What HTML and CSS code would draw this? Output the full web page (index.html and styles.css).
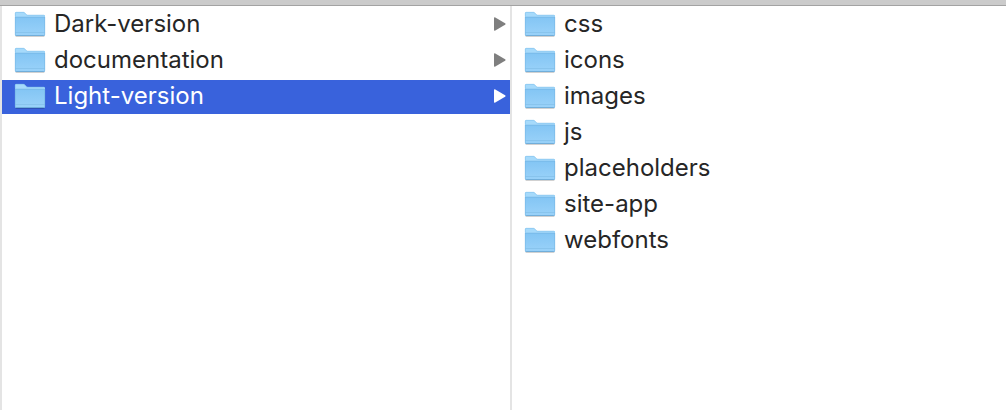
FILE: index.html
```html
<!DOCTYPE html>
<html lang="en">
<head>
<meta charset="utf-8">
<title>Files</title>
<link rel="stylesheet" href="styles.css">
</head>
<body>
<svg class="defs" aria-hidden="true">
  <defs>
    <linearGradient id="front" x1="0" y1="0" x2="0" y2="1">
      <stop offset="0" stop-color="#83c5f4"/>
      <stop offset="1" stop-color="#9ad2f9"/>
    </linearGradient>
    <symbol id="folder" viewBox="0 0 32 28">
      <path d="M1.500 25.200h29v1q0 .7-.7.7H2.200q-.7 0-.7-.7z" fill="#000" opacity=".18"/>
      <path d="M1 3.200Q1 2 2.200 2h7.200q.9 0 1.500.7l1.300 1.500q.6.700 1.500.700H29.800Q31 4.900 31 6.100V24.600q0 1.200-1.200 1.200H2.200Q1 25.800 1 24.600z" fill="#a6dafb"/>
      <path d="M1 7h30v17.600q0 1.200-1.200 1.200H2.200Q1 25.800 1 24.600z" fill="url(#front)"/>
      <path d="M1 7.200h30" stroke="#75b8e6" stroke-width=".8"/>
      <path d="M1.400 22.500h29.200" stroke="#82bfe8" stroke-width=".7"/>
      <path d="M1.400 24.800q0 .7.800.7h27.600q.8 0 .8-.7" fill="none" stroke="#65a5d2" stroke-width=".8"/>
      <path d="M1.300 7v17.500M30.700 7v17.500" stroke="#74b5e2" stroke-width=".6"/>
      <path d="M1.300 6.500V3.200q0-.9.900-.9h7.200q.8 0 1.300.6l1.300 1.500q.7.800 1.700.8h16.100q.9 0 .9.900" fill="none" stroke="#7fc0eb" stroke-width=".6"/>
    </symbol>
    <symbol id="arrow" viewBox="0 0 14 16">
      <path d="M1 2.200Q1 .8 2.300 1.500L12.100 7.200Q13.300 8 12.100 8.800L2.300 14.500Q1 15.200 1 13.800z" fill="currentColor"/>
    </symbol>
  </defs>
</svg>
<div class="window">
  <div class="topbar"></div>
  <main class="columns">
    <nav class="column parent" aria-label="Folders">
      <a class="row" href="#"><svg class="folder"><use href="#folder"/></svg><span class="name">Dark-version</span><svg class="arrow"><use href="#arrow"/></svg></a>
      <a class="row" href="#"><svg class="folder"><use href="#folder"/></svg><span class="name">documentation</span><svg class="arrow"><use href="#arrow"/></svg></a>
      <a class="row selected" href="#" aria-current="true"><svg class="folder"><use href="#folder"/></svg><span class="name">Light-version</span><svg class="arrow"><use href="#arrow"/></svg></a>
    </nav>
    <nav class="column" aria-label="Light-version">
      <a class="row" href="#"><svg class="folder"><use href="#folder"/></svg><span class="name">css</span></a>
      <a class="row" href="#"><svg class="folder"><use href="#folder"/></svg><span class="name">icons</span></a>
      <a class="row" href="#"><svg class="folder"><use href="#folder"/></svg><span class="name">images</span></a>
      <a class="row" href="#"><svg class="folder"><use href="#folder"/></svg><span class="name">js</span></a>
      <a class="row" href="#"><svg class="folder"><use href="#folder"/></svg><span class="name">placeholders</span></a>
      <a class="row" href="#"><svg class="folder"><use href="#folder"/></svg><span class="name">site-app</span></a>
      <a class="row" href="#"><svg class="folder"><use href="#folder"/></svg><span class="name">webfonts</span></a>
    </nav>
  </main>
</div>
</body>
</html>
```
FILE: styles.css
```css
* {
  box-sizing: border-box;
}

body {
  margin: 0;
  background: #fff;
  color: #262626;
  font-family: Inter, "Liberation Sans", sans-serif;
  font-size: 24px;
  line-height: 32px;
}

.defs {
  position: absolute;
  width: 0;
  height: 0;
}

.window {
  display: flex;
  flex-direction: column;
  min-height: 100vh;
}

.topbar {
  height: 6px;
  background: #cbcbcb;
  border-bottom: 1px solid #a3a3a3;
}

.columns {
  display: grid;
  grid-template-columns: 510px 1fr;
  flex: 1;
  border-left: 2px solid #e4e4e4;
}

.column {
  display: flex;
  flex-direction: column;
  gap: 2px;
  padding-top: 2px;
}

.parent {
  border-right: 2px solid #e4e4e4;
}

.row {
  display: flex;
  align-items: center;
  height: 34px;
  padding: 0 3px 2px 12px;
  color: inherit;
  text-decoration: none;
}

.folder {
  flex: none;
  width: 32px;
  height: 28px;
}

.name {
  flex: 1;
  margin-left: 8px;
}

.arrow {
  flex: none;
  width: 14px;
  height: 16px;
  color: #7f7f7f;
}

.selected {
  background: #3962dc;
  color: #fff;
}

.selected .arrow {
  color: #fff;
}
```
